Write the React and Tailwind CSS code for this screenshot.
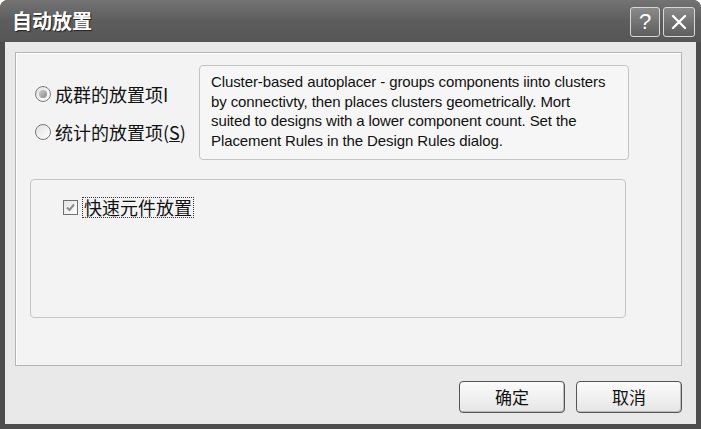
import React from "react";

const cjk = { fontFamily: '"Noto Sans CJK SC", "Noto Sans", sans-serif' };
const latin = { fontFamily: '"Liberation Sans", Arial, sans-serif' };

function Radio({ checked }) {
  return (
    <span className="relative inline-flex h-[16px] w-[16px] shrink-0 items-center justify-center rounded-full border border-[#7a7a7a] bg-gradient-to-br from-[#e2e2e2] to-[#ffffff]">
      {checked && <span className="h-[8px] w-[8px] rounded-full bg-gradient-to-br from-[#cfcfcf] to-[#8a8a8a]" />}
    </span>
  );
}

export default function App() {
  return (
    <div className="flex h-[429px] w-[701px] flex-col overflow-hidden rounded-t-[8px] bg-[#4d4d4d]" style={cjk}>
      {/* Title bar */}
      <div className="flex h-[42px] shrink-0 items-center justify-between bg-gradient-to-b from-[#747474] via-[#5d5d5d] to-[#565656] pl-[12px] pr-[6px]">
        <span className="text-[20px] font-bold leading-none text-white [text-shadow:1px_1px_1px_#222]">自动放置</span>
        <div className="flex gap-[3px] pt-[2px]">
          <div className="flex h-[30px] w-[30px] items-center justify-center rounded-[3px] border border-[#d8d8d8] bg-gradient-to-b from-[#8a8a8a] to-[#5e5e5e] text-[22px] leading-none text-white" style={latin}>?</div>
          <div className="flex h-[30px] w-[32px] items-center justify-center rounded-[3px] border border-[#d8d8d8] bg-gradient-to-b from-[#8a8a8a] to-[#5e5e5e]">
            <svg width="18" height="18" viewBox="0 0 18 18"><path d="M3 3 L15 15 M15 3 L3 15" stroke="white" strokeWidth="2.4" strokeLinecap="round" /></svg>
          </div>
        </div>
      </div>

      {/* Body */}
      <div className="mx-[5px] mb-[5px] flex flex-1 flex-col bg-[#e9e9e9] pl-[10px] pr-[14px] pt-[10px]">
        {/* Panel */}
        <div className="flex h-[314px] flex-col border border-[#b4b4b4] bg-[#f3f3f3] pl-[14px] pt-[12px] shadow-[inset_1px_1px_0_#ffffff]">
          <div className="flex">
            <div className="flex w-[169px] flex-col gap-[20px] pt-[20px] pl-[5px] text-[18px] leading-[18px] text-[#111]">
              <label className="flex items-center gap-[4px]">
                <Radio checked />
                <span>成群的放置项I</span>
              </label>
              <label className="flex items-center gap-[4px]">
                <Radio />
                <span>统计的放置项(<span className="underline">S</span>)</span>
              </label>
            </div>
            <div className="h-[95px] w-[430px] whitespace-nowrap rounded-[4px] border border-[#c4c4c4] bg-[#f6f6f6] pl-[11px] pt-[6px] text-[15px] leading-[19.5px] tracking-[-0.1px] text-[#111]" style={latin}>
              Cluster-based autoplacer - groups components iinto clusters<br />
              by connectivty, then places clusters geometrically. Mort<br />
              suited to designs with a lower component count. Set the<br />
              Placement Rules in the Design Rules dialog.
            </div>
          </div>
          <div className="mt-[19px] h-[139px] w-[596px] rounded-[4px] border border-[#c4c4c4] bg-[#f3f3f3] pl-[32px] pt-[17px]">
            <label className="flex items-center gap-[4px]">
              <span className="flex h-[15px] w-[15px] items-center justify-center border border-[#6f6f6f] bg-gradient-to-br from-[#e4e4e4] to-[#ffffff]">
                <svg width="11" height="11" viewBox="0 0 11 11"><path d="M2 5.5 L4.5 8 L9 2.5" stroke="#8c8c8c" strokeWidth="2" fill="none" /></svg>
              </span>
              <span className="border border-dotted border-[#333] px-[1px] text-[18px] leading-[19px] text-[#111]">快速元件放置</span>
            </label>
          </div>
        </div>
        {/* Buttons */}
        <div className="mt-[15px] flex justify-end gap-[11px]">
          <button className="h-[32px] w-[106px] rounded-[4px] border border-[#555] bg-gradient-to-b from-[#fbfbfb] to-[#e6e6e6] text-[17px] text-[#111] shadow-[inset_-1px_-1px_0_#bbb]">确定</button>
          <button className="h-[32px] w-[106px] rounded-[4px] border border-[#555] bg-gradient-to-b from-[#fbfbfb] to-[#e6e6e6] text-[17px] text-[#111] shadow-[inset_-1px_-1px_0_#bbb]">取消</button>
        </div>
      </div>
    </div>
  );
}
